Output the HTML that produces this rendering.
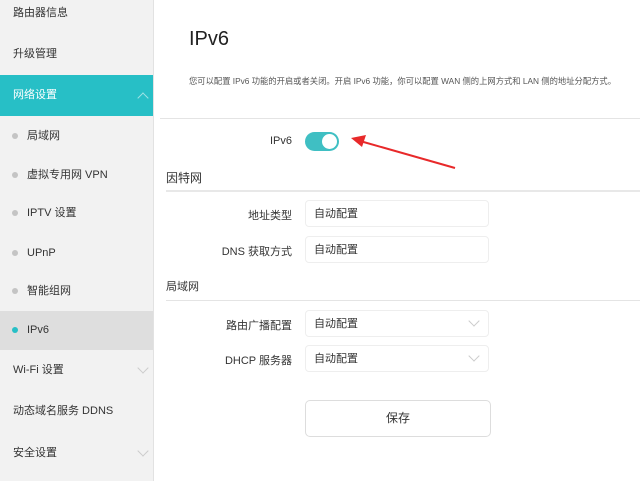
<!DOCTYPE html><html><head><meta charset="utf-8"><style>
*{margin:0;padding:0;box-sizing:border-box}
body{width:640px;height:481px;overflow:hidden;background:#fff;font-family:"Liberation Sans","Noto Sans CJK SC",sans-serif;color:#333;position:relative}
.sb{position:absolute;left:0;top:0;width:154px;height:481px;background:#f2f2f2;border-right:1px solid #e2e2e2}
.it{position:absolute;left:0;width:153px;font-size:11px;color:#333;line-height:40px;height:40px}
.it.t{padding-left:13px}
.it.s{padding-left:27px}
.dot{position:absolute;left:12px;top:17px;width:6px;height:6px;border-radius:50%;background:#c4c4c4}
.chev{position:absolute;right:6px;top:14px;width:8px;height:8px;border-right:1px solid #ccc;border-bottom:1px solid #ccc;transform:rotate(45deg)}
.a{position:absolute;font-size:11px}
.lb{position:absolute;right:348px;font-size:11px;text-align:right;white-space:nowrap}
.inp{position:absolute;left:305px;width:184px;height:27px;border:1px solid #eee;border-radius:4px;font-size:11px;line-height:26px;padding-left:8px}
.sel .chev{right:10px;top:6px;border-color:#ccc}
.line{position:absolute;height:1px;background:#e4e4e4}
</style></head><body>
<div class="sb">
<div class="it t" style="top:-7px">路由器信息</div>
<div class="it t" style="top:34px">升级管理</div>
<div class="it t" style="top:75px;height:41px;background:#27bfc6;color:#fff">网络设置<div class="chev" style="transform:rotate(-135deg);top:19px;border-color:#9fe2e5"></div></div>
<div class="it s" style="top:116px"><span class="dot"></span>局域网</div>
<div class="it s" style="top:155px"><span class="dot"></span>虚拟专用网 VPN</div>
<div class="it s" style="top:193px"><span class="dot"></span>IPTV 设置</div>
<div class="it s" style="top:233px"><span class="dot"></span>UPnP</div>
<div class="it s" style="top:271px"><span class="dot"></span>智能组网</div>
<div class="it s" style="top:311px;height:39px;line-height:39px;background:#dedede"><span class="dot" style="background:#27bfc6;top:16px"></span>IPv6</div>
<div class="it t" style="top:350px">Wi-Fi 设置<div class="chev"></div></div>
<div class="it t" style="top:391px">动态域名服务 DDNS</div>
<div class="it t" style="top:433px">安全设置<div class="chev"></div></div>
</div>
<div class="a" style="left:189px;top:28px;font-size:20px;color:#222">IPv6</div>
<div class="a" style="left:189px;top:75px;font-size:8.3px;color:#555">您可以配置 IPv6 功能的开启或者关闭。开启 IPv6 功能，你可以配置 WAN 侧的上网方式和 LAN 侧的地址分配方式。</div>
<div class="line" style="left:160px;top:118px;width:480px"></div>
<div class="lb" style="top:135px">IPv6</div>
<div style="position:absolute;left:305px;top:132px;width:34px;height:19px;border-radius:10px;background:#3fbfc3"><div style="position:absolute;right:2px;top:2px;width:15px;height:15px;border-radius:50%;background:#fff"></div></div>
<svg style="position:absolute;left:0;top:0" width="640" height="481"><line x1="455" y1="168" x2="360" y2="141" stroke="#e8292a" stroke-width="2"/><polygon points="351,138 366,135 362,147" fill="#e8292a"/></svg>
<div class="a" style="left:166px;top:169px;font-size:12px">因特网</div>
<div class="line" style="left:166px;top:190px;width:474px;height:2px;background:#e8e8e8"></div>
<div class="lb" style="top:207px">地址类型</div>
<div class="inp" style="top:200px">自动配置</div>
<div class="lb" style="top:243px">DNS 获取方式</div>
<div class="inp" style="top:236px">自动配置</div>
<div class="a" style="left:166px;top:278px;font-size:11px">局域网</div>
<div class="line" style="left:166px;top:300px;width:474px"></div>
<div class="lb" style="top:317px">路由广播配置</div>
<div class="inp sel" style="top:310px">自动配置<div class="chev"></div></div>
<div class="lb" style="top:352px">DHCP 服务器</div>
<div class="inp sel" style="top:345px">自动配置<div class="chev"></div></div>
<div style="position:absolute;left:305px;top:400px;width:186px;height:37px;border:1px solid #ddd;border-radius:5px;text-align:center;line-height:35px;font-size:12px">保存</div>
</body></html>
